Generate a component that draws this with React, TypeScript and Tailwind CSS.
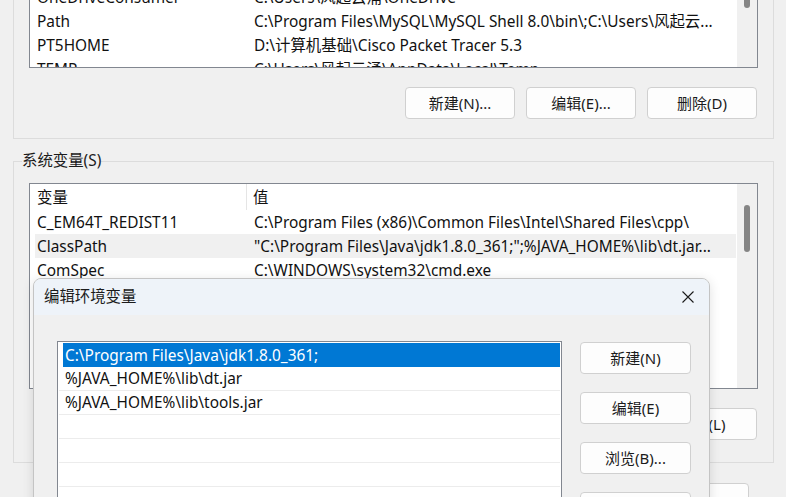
import React from "react";

const font = "font-['Noto_Sans','Noto_Sans_CJK_SC',sans-serif]";

function Btn({ children, w = "w-[110px]" }: { children: React.ReactNode; w?: string }) {
  return (
    <div
      className={`${w} h-[32px] shrink-0 rounded-[4px] border border-[#d0d0d0] bg-[#fdfdfd] flex items-center justify-center text-[15px] text-[#1b1b1b]`}
    >
      {children}
    </div>
  );
}

function Row({ name, value, hover }: { name: string; value: string; hover?: boolean }) {
  return (
    <div className={`h-[24px] pt-[2px] flex items-center whitespace-nowrap ${hover ? "bg-[#f0f0f0]" : ""}`}>
      <div className="w-[219px] pl-[2px] overflow-hidden">{name}</div>
      <div className="flex-1 overflow-hidden">{value}</div>
    </div>
  );
}

export default function App() {
  return (
    <div className={`relative w-[786px] h-[497px] overflow-hidden bg-[#f0f0f0] text-[15.4px] text-[#111] ${font}`}>
      {/* 用户变量 */}
      <div className="ml-[13px] w-[761px] border-x border-b border-[#dcdcdc] pb-[19px]">
        <div className="ml-[15px] w-[729px] h-[68px] border-x border-b border-[#828790] bg-white overflow-hidden flex">
          <div className="flex-1 -mt-[15px] pl-[5px] pr-[1px]">
            <Row name="OneDriveConsumer" value="C:\Users\风起云涌\OneDrive" />
            <Row name="Path" value="C:\Program Files\MySQL\MySQL Shell 8.0\bin\;C:\Users\风起云..." />
            <Row name="PT5HOME" value="D:\计算机基础\Cisco Packet Tracer 5.3" />
            <Row name="TEMP" value="C:\Users\风起云涌\AppData\Local\Temp" />
          </div>
          <div className="w-[20px] bg-[#f0f0f0] flex justify-center">
            <div className="w-[6px] h-[8px] rounded-b-[3px] bg-[#858585]" />
          </div>
        </div>
        <div className="flex justify-end gap-[11px] mt-[19px] pr-[16px]">
          <Btn>新建(N)...</Btn>
          <Btn>编辑(E)...</Btn>
          <Btn>删除(D)</Btn>
        </div>
      </div>

      {/* 系统变量 */}
      <fieldset className="mt-[12px] ml-[13px] w-[761px] border border-[#dcdcdc] px-0 pb-[22px]">
        <legend className="ml-[8px] leading-[20px] text-[#1b1b1b]">系统变量(S)</legend>
        <div className="mt-[12px] ml-[15px] w-[729px] h-[206px] border border-[#828790] bg-white overflow-hidden flex">
          <div className="flex-1 pl-[5px] pr-[1px]">
            <div className="h-[26px] flex items-center whitespace-nowrap">
              <div className="w-[212px] pl-[2px] pt-[2px] h-full flex items-center border-r border-[#e5e5e5]">变量</div>
              <div className="pl-[6px] pt-[2px]">值</div>
            </div>
            <Row name="C_EM64T_REDIST11" value="C:\Program Files (x86)\Common Files\Intel\Shared Files\cpp\" />
            <Row hover name="ClassPath" value={'"C:\\Program Files\\Java\\jdk1.8.0_361;";%JAVA_HOME%\\lib\\dt.jar...'} />
            <Row name="ComSpec" value="C:\WINDOWS\system32\cmd.exe" />
            <Row name="DriverData" value="C:\Windows\System32\Drivers\DriverData" />
            <Row name="JAVA_HOME" value="C:\Program Files\Java\jdk1.8.0_361" />
            <Row name="NUMBER_OF_PROCESSORS" value="16" />
            <Row name="OS" value="Windows_NT" />
          </div>
          <div className="w-[20px] bg-[#f0f0f0] flex justify-center pt-[21px]">
            <div className="w-[6px] h-[47px] rounded-[3px] bg-[#858585]" />
          </div>
        </div>
        <div className="flex justify-end gap-[11px] mt-[19px] pr-[16px]">
          <Btn>新建(W)...</Btn>
          <Btn>编辑(I)...</Btn>
          <Btn>删除(L)</Btn>
        </div>
      </fieldset>

      <div className="flex justify-end gap-[12px] mt-[20px] pr-[37px]">
        <Btn>确定</Btn>
        <Btn>取消</Btn>
      </div>

      {/* 编辑环境变量 对话框 */}
      <div className="absolute left-[33px] top-[278px] w-[677px] h-[240px] rounded-t-[8px] border border-[#c4c4c4] bg-[#f0f0f0] overflow-hidden shadow-[0_2px_12px_rgba(0,0,0,0.12)]">
        <div className="h-[36px] bg-[#eef3f9] flex items-center justify-between pl-[10px] pr-[15px] text-[#1b1b1b]">
          <span>编辑环境变量</span>
          <svg width="12" height="12" viewBox="0 0 12 12" className="text-[#1b1b1b]">
            <path d="M0.5 0.5 L11.5 11.5 M11.5 0.5 L0.5 11.5" stroke="currentColor" strokeWidth="1.1" fill="none" />
          </svg>
        </div>
        <div className="flex pl-[23px] pt-[26px] gap-[18px]">
          <div className="w-[505px] h-[200px] border-l border-t border-r border-[#828790] bg-white px-[1px] pt-[1px]">
            <div className="h-[24px] pl-[4px]">
              <div className="h-full bg-[#0078d4] text-white flex items-center pl-[2px] pt-[1px]">C:\Program Files\Java\jdk1.8.0_361;</div>
            </div>
            <div className="h-[24px] border-b border-[#ececec] flex items-center pl-[6px] pt-[1px]">%JAVA_HOME%\lib\dt.jar</div>
            <div className="h-[24px] border-b border-[#ececec] flex items-center pl-[6px] pt-[1px]">%JAVA_HOME%\lib\tools.jar</div>
            <div className="h-[24px] border-b border-[#ececec]" />
            <div className="h-[24px] border-b border-[#ececec]" />
            <div className="h-[24px] border-b border-[#ececec]" />
            <div className="h-[24px] border-b border-[#ececec]" />
          </div>
          <div className="flex flex-col gap-[18px] pt-[1px]">
            <Btn w="w-[111px]">新建(N)</Btn>
            <Btn w="w-[111px]">编辑(E)</Btn>
            <Btn w="w-[111px]">浏览(B)...</Btn>
            <Btn w="w-[111px]">删除(D)</Btn>
          </div>
        </div>
      </div>
    </div>
  );
}
